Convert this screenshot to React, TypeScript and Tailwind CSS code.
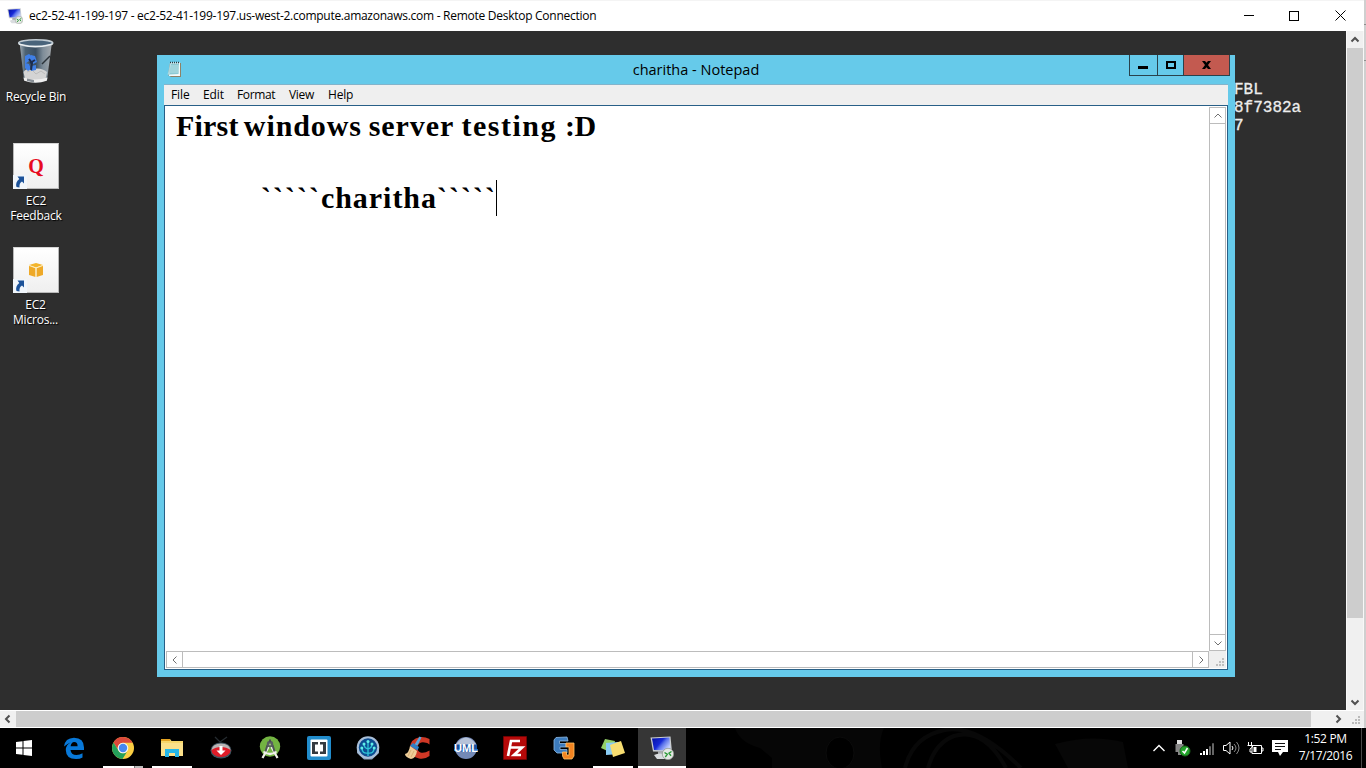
import React from "react";

const UI = "font-['Open_Sans','Noto_Sans',sans-serif]";

function Chevron({ dir, className }: { dir: "up" | "down" | "left" | "right"; className: string }) {
  const d = {
    up: "M1.5 6.5 5 3l3.5 3.5",
    down: "M1.5 3.5 5 7l3.5-3.5",
    left: "M6.5 1.5 3 5l3.5 3.5",
    right: "M3.5 1.5 7 5 3.5 8.5",
  }[dir];
  return (
    <svg width="10" height="10" viewBox="0 0 10 10" fill="none" stroke="currentColor" className={className}>
      <path d={d} />
    </svg>
  );
}

function Grip({ className }: { className: string }) {
  return (
    <svg width="9" height="9" viewBox="0 0 9 9" className={className} fill="currentColor">
      <path d="M6 0h2v2H6zM3 3h2v2H3zM6 3h2v2H6zM0 6h2v2H0zM3 6h2v2H3zM6 6h2v2H6z" />
    </svg>
  );
}

function RemoteIcon({ size }: { size: number }) {
  return (
    <svg width={size} height={size} viewBox="0 0 24 24" className="shrink-0">
      <defs>
        <linearGradient id="scr" x1="0" y1="0" x2="1" y2=".6">
          <stop offset="0" stopColor="#0410a0" />
          <stop offset=".5" stopColor="#1629d8" />
          <stop offset=".65" stopColor="#5870ea" />
          <stop offset="1" stopColor="#c2d0ff" />
        </linearGradient>
      </defs>
      <path d="M.5 1.500 20.500.500 22 16 3 15.500z" fill="#c9cdd0" />
      <path d="M2 2.500 19.500 1.500 20.500 14.500 4 14z" fill="url(#scr)" />
      <path d="M8 15h8l1 4H8z" fill="#a9adb0" />
      <path d="M4 19q6-3 12 0l-1 4H7z" fill="#d9dcdf" />
      <circle cx="18" cy="18" r="5.700" fill="#e4e8e4" stroke="#8d938d" strokeWidth=".7" />
      <path d="m14.500 16.500 2.800 1.800-2 2.700M21.500 15.500l-2.500 1.700 2 2.500" fill="none" stroke="#2a9a36" strokeWidth="1.400" />
    </svg>
  );
}

function RecycleBin() {
  return (
    <svg width="38" height="46" viewBox="0 0 38 46">
      <defs>
        <linearGradient id="bin" x1="0" x2="1">
          <stop offset="0" stopColor="#b5c3cd" />
          <stop offset=".18" stopColor="#536c80" />
          <stop offset=".5" stopColor="#3c546a" />
          <stop offset=".72" stopColor="#8c9dab" />
          <stop offset="1" stopColor="#b8bec3" />
        </linearGradient>
      </defs>
      <path d="M2.500 4 7 42q12 5 23 0l5-38z" fill="url(#bin)" opacity=".85" />
      <path d="M6.500 34q3-4 9-3 9-2 14.500 3l-1.500 7q-10 4-20.500 0z" fill="#d4d4d4" />
      <path d="m10 34 5-2 4 4 5-3 4 3" fill="none" stroke="#bcbcbc" />
      <path d="M6.500 39.500q12 4 24 0l-.7 3.200q-11.300 4-22.600 0z" fill="#eee" />
      <path d="m10 40.500 7 1.500v2.500l-7-1.500z" fill="#888f96" />
      <g fill="#3f7fe6">
        <path d="m8 18 4-2 5 4-2 4-3-1-4 3z" />
        <path d="m14 17 4 1 2 6-4 2-2-3z" />
        <path d="m8 25 4 1 2 5-3 2-3-3z" />
        <path d="m14 28 5-1v5l-5 1z" />
      </g>
      <path d="m12 21 3 4-1 7M13 25l5-3" fill="none" stroke="#1b2c4e" strokeWidth="2" />
      <path d="m33 18-8 8" stroke="#2b3339" strokeWidth="1.500" />
      <ellipse cx="18.700" cy="5" rx="17" ry="3.200" fill="#49647b" stroke="#c2ccd3" strokeWidth="1.600" />
      <path d="M2 6q16 5.500 33.500 0" fill="none" stroke="#eef2f4" strokeWidth="1.300" />
    </svg>
  );
}

function DesktopTile({ children }: { children: React.ReactNode }) {
  return (
    <div className="relative flex h-[46px] w-[46px] items-center justify-center border border-[#b9b9b9] border-t-[#d6d6d6] bg-linear-to-b from-white to-[#efefef]">
      {children}
      <svg width="14" height="14" viewBox="0 0 14 14" className="absolute -bottom-px -left-px bg-[#f1f6fb]">
        <path d="M4.500 1.500h6.500v7L9 6.500Q6 8 6.500 12.500L3.500 12Q2 7.500 6.300 4z" fill="#1c5299" />
      </svg>
    </div>
  );
}

function DesktopLabel({ children }: { children: React.ReactNode }) {
  return (
    <div className="whitespace-nowrap text-center text-[12px] leading-[15px] tracking-[-0.200px] text-white [text-shadow:1px_1px_1px_#000]">
      {children}
    </div>
  );
}

function NotepadIcon() {
  return (
    <svg width="16" height="17" viewBox="0 0 16 17">
      <path d="M3 2h11v14H4L1 14z" fill="#8f8266" />
      <path d="M3 1.500h10V15H2z" fill="#f2f9f9" />
      <path d="M3.500 2.500H12L11.500 13 2.500 13.500z" fill="#8ccad4" />
      <path d="M3 5h9M3 7h9M3 9h9M3 11h8" stroke="#bfe4e9" strokeWidth=".8" />
      <path d="M3 1.500h10" stroke="#2c3b40" strokeWidth="1.500" strokeDasharray="1 1" />
      <path d="m3 4-2.500 9.500 2 .5" fill="#a5d9e3" />
    </svg>
  );
}

function Notepad() {
  const button = "box-content flex h-[15px] w-[15px] shrink-0 items-center justify-center border-[#bcbcbc] bg-white text-[#707070]";
  return (
    <div className="absolute left-[157px] top-[24px] flex h-[622px] w-[1078px] flex-col bg-[#66caea] px-[7px] pb-[7px] text-black">
      <div className="relative flex h-[29px] shrink-0 items-center justify-center">
        <div className="absolute left-[3px] top-[6px]"><NotepadIcon /></div>
        <span className="whitespace-nowrap text-[14.5px] leading-[20px]">charitha - Notepad</span>
        <div className="absolute -right-[2px] top-0 flex h-[21px] divide-x divide-[#29424c] border border-t-0 border-[#29424c]">
          <div className="flex w-[28px] items-end justify-center pb-[6px] pr-px"><div className="h-[3px] w-[10px] bg-black" /></div>
          <div className="flex w-[26px] items-center justify-center"><div className="h-2 w-[10px] border-2 border-black" /></div>
          <div className="flex w-[45px] items-center justify-center bg-[#c35a50] pr-px">
            <svg width="9" height="8" viewBox="0 0 9 8"><path d="M0 0h3l1.500 1.800L6 0h3L6 4l3 4H6L4.500 6.200 3 8H0l3-4z" /></svg>
          </div>
        </div>
      </div>
      <div className="flex h-[21px] shrink-0 items-center gap-[14px] border-t border-[#83b4cb] bg-[#efefef] pl-[7px] text-[12px] leading-none">
        <span className="w-[18px] whitespace-nowrap tracking-[-0.100px]">File</span>
        <span className="w-[20px] tracking-[-0.100px]">Edit</span>
        <span className="w-[38px] tracking-[-0.350px]">Format</span>
        <span className="w-[25px] tracking-[-0.300px]">View</span>
        <span className="tracking-[-0.200px]">Help</span>
      </div>
      <div className="flex min-h-0 flex-1 flex-col border border-[#285f87] bg-white p-px">
        <div className="flex min-h-0 flex-1">
          <div className="flex-1 pl-[10px] pt-px font-['Liberation_Serif',serif] text-[30px] font-bold leading-9">
            <div className="whitespace-pre">
              <span className="tracking-[0.200px] [word-spacing:-2.500px]">First </span>
              <span className="tracking-[0.900px] [word-spacing:-1.500px]">windows </span>
              <span className="tracking-[0.900px] [word-spacing:-0.500px]">server </span>
              <span className="tracking-[1.500px] [word-spacing:-1px]">testing </span>
              <span className="tracking-[-0.500px]">:D</span>
            </div>
            <div className="h-9" />
            <div className="flex whitespace-nowrap pl-[85px]">
              <span className="tracking-[2px]">`````</span>
              <span className="tracking-[0.960px]">charitha</span>
              <span className="tracking-[2px]">`````</span>
              <span className="-ml-[1px] h-9 w-px bg-black" />
            </div>
          </div>
          <div className="flex w-[17px] flex-col justify-between border border-[#bcbcbc] bg-white">
            <div className={`${button} border-b`}><Chevron dir="up" className="" /></div>
            <div className={`${button} border-t`}><Chevron dir="down" className="" /></div>
          </div>
        </div>
        <div className="flex h-[17px] shrink-0">
          <div className="flex flex-1 justify-between border border-[#bcbcbc] bg-white">
            <div className={`${button} border-r`}><Chevron dir="left" className="" /></div>
            <div className={`${button} border-l`}><Chevron dir="right" className="" /></div>
          </div>
          <div className="flex w-[17px] items-end justify-end bg-[#efefef] pb-px pr-px"><Grip className="text-[#bfbfbf]" /></div>
        </div>
      </div>
    </div>
  );
}

const apps: { name: string; icon: React.ReactNode; bar?: string; active?: boolean }[] = [
  { name: "edge", icon: <svg width="22" height="22" viewBox="0 0 22 22"><path d="M1 9.500Q2 1 11 .7 21 1 21 10.500V13H7.500q.5 5 6 5 3.500 0 6-1.700v4.200Q17 22 13 22 3 22 2.800 13 2.700 8 8 5.200 5.500 6 1 9.500zM7.600 9.300h7q0-4.200-3.400-4.200-3 .2-3.600 4.200z" fill="#0878d8" fillRule="evenodd" /></svg> },
  { name: "chrome", bar: "chrome", icon: <svg width="22" height="22" viewBox="0 0 22 22"><circle cx="11" cy="11" r="11" fill="#fbce43" /><path d="M1.500 5.500A11 11 0 0 1 20.600 5.700H11a5.300 5.300 0 0 0-5 7z" fill="#dc493b" /><path d="M1.500 5.500A11 11 0 0 0 10.500 22l4.700-7.600A5.300 5.300 0 0 1 6.200 13z" fill="#23a05a" /><circle cx="11" cy="11" r="5.300" fill="#f5f5f5" /><circle cx="11" cy="11" r="4.200" fill="#4788f0" /></svg> },
  { name: "files", bar: "full", icon: <svg width="22" height="20" viewBox="0 0 22 20"><path d="M0 1h9l1.500 2H22v15H0z" fill="#f7d66a" /><path d="M0 1h9v2H0z" fill="#e4a322" /><path d="M0 5h22v13H0z" fill="#fbe08a" /><path d="M4 19v-8h14v8h-4v-4H8v4z" fill="#25b7e9" /></svg> },
  { name: "downloader", icon: <svg width="22" height="24" viewBox="0 0 22 24"><path d="m5 1 5 5 7-5" fill="none" stroke="#252b30" strokeWidth="1.300" /><ellipse cx="11" cy="14.500" rx="10.500" ry="8" fill="#3d535e" /><ellipse cx="11" cy="14.500" rx="9.500" ry="6.500" fill="#e01c28" /><path d="M1.500 14q1-6.500 9.500-6.500T20.500 14q-4-3-9.500-3t-9.500 3z" fill="#b9b4b4" /><path d="M9.500 10h3v4.500h3L11 19l-4.500-4.500h3z" fill="#fff" /></svg> },
  { name: "android", icon: <svg width="22" height="24" viewBox="0 0 22 24"><circle cx="11" cy="10.500" r="10.200" fill="#73b442" /><path d="m9.500 11-6 11M12.500 11l6 11M4.500 15.500q6.500 5 13 0" fill="none" stroke="#f0f1ea" strokeWidth="2.200" /><path d="m8.500 9-2 6.500M13.500 9l2 6.500" stroke="#4d5255" strokeWidth="2" /><circle cx="11" cy="8" r="3.200" fill="#585e60" /><path d="M11 3.500V6" stroke="#4b5052" strokeWidth="2" /><circle cx="11" cy="8.500" r="1.100" fill="#9fbe82" /></svg> },
  { name: "brackets", icon: <svg width="24" height="24" viewBox="0 0 24 24"><rect width="24" height="24" rx="2" fill="#218ccc" /><rect x="3.500" y="3.500" width="17" height="17" rx="1" fill="#fff" /><path d="M11 6H5v12h6v-2.500H8v-7h3zM13 6h6v12h-6v-2.500h3v-7h-3z" fill="#343a40" /></svg> },
  { name: "tree", icon: <svg width="24" height="24" viewBox="0 0 24 24"><path d="M1 13h22v4l-7 6.500H8L1 17z" fill="#8ca3bf" /><circle cx="12" cy="11.500" r="11.300" fill="#a9bfd9" /><circle cx="12" cy="11.500" r="9.200" fill="#0c4d92" /><path d="M12 20V6M12 17q-6 1-6-5M12 17q6 1 6-5M12 13q-4-1-4-5M12 13q4-1 4-5" fill="none" stroke="#2fc5d8" strokeWidth="1.300" /><g fill="#62eee8"><circle cx="12" cy="5.500" r="1.500" /><circle cx="8" cy="8" r="1.500" /><circle cx="16" cy="8" r="1.500" /><circle cx="5.800" cy="12" r="1.500" /><circle cx="18.200" cy="12" r="1.500" /></g></svg> },
  { name: "cleaner", icon: <svg width="25" height="24" viewBox="0 0 25 24"><path d="M24.500 8.500V3Q20 .5 15 1 5 3 5 12t9 10.500q6 1 10.500-2.500v-5.500q-5 3-9 2-4-2-3-6 2-5 7-4 3 0 5 2z" fill="#cf3826" /><path d="m14.500.5 2 1-4 8-3-1z" fill="#5aa5dc" /><path d="m8 7 6 4-1.500 3.500L5 10z" fill="#2d7fc7" /><path d="m5 10 7 5q-1 7-6 8-6-2-6-5 4-1 5-8z" fill="#eecd98" /><path d="m6 14-3 6M9 15l-3 6" stroke="#cfa266" strokeWidth=".7" /></svg> },
  { name: "uml", icon: <svg width="24" height="24" viewBox="0 0 24 24"><circle cx="12" cy="12" r="11" fill="#7389b6" /><path d="M2 8Q12-5 22 8v3H2z" fill="#b6c2d8" /><path d="M1 12h22" stroke="#174f9c" strokeWidth="7" /><path d="M0 14h24" stroke="#2f80da" strokeWidth="1.500" /><text x="0" y="15.500" textLength="24" lengthAdjust="spacingAndGlyphs" fill="white" fontFamily="Liberation Sans" fontWeight="bold" fontSize="10.500">UML</text></svg> },
  { name: "filezilla", icon: <svg width="24" height="24" viewBox="0 0 24 24"><path d="M.5.500h23v23H.5z" fill="#b50909" stroke="#8d0000" strokeDasharray="1 1" /><path d="M5 20 8 5h9M7 11.500h7M12 11.500h7l-8 7.500h7" fill="none" stroke="#fff" strokeWidth="2.700" /></svg> },
  { name: "ej", icon: <svg width="24" height="24" viewBox="0 0 24 24"><path d="M4 1.500 15 1l1 4H7.500v2.500H14V11H8v2.500h7V17H5l-3-3V4z" fill="#3c7bbd" stroke="#8ebbe6" strokeWidth=".8" /><path d="M14 7h8v13l-2 3h-8l-1.500-3v-4h4v3h2.500v-8H14z" fill="#f38421" stroke="#ffc568" strokeWidth=".8" /></svg> },
  { name: "notes", bar: "full", icon: <svg width="24" height="24" viewBox="0 0 24 24"><path d="m4 3 10 2-3 12L0 12z" fill="#92cf68" /><path d="m5 7 12-1 2 12-14 1z" fill="#8accf4" /><path d="m9 9 11-4 4 12-12 4z" fill="#f7dd71" /></svg> },
  { name: "remote", bar: "wide", active: true, icon: <RemoteIcon size={24} /> },
];

function Taskbar() {
  return (
    <div className="flex h-10 bg-black text-white">
      <div className="flex w-[48px] shrink-0 items-center justify-center">
        <svg width="16" height="16" viewBox="0 0 16 16" fill="#fff"><path d="M0 2 6.500 1.200V7.500H0zM7.500 1 16 0v7.500H7.500zM0 8.500h6.500v6.300L0 14zM7.500 8.500H16V16l-8.500-1z" /></svg>
      </div>
      <div className="ml-[2px] flex gap-px">
        {apps.map((app) => (
          <div key={app.name} className={`relative flex w-12 shrink-0 items-center justify-center ${app.active ? "bg-[#363636]" : ""}`}>
            {app.icon}
            {app.bar && (
              <div className={`absolute bottom-0 flex h-[2px] bg-white ${app.bar === "wide" ? "inset-x-0" : "inset-x-1"}`}>
                {app.bar === "chrome" && <div className="ml-auto w-[9px] border-l border-[#777] bg-[#bbb]" />}
              </div>
            )}
          </div>
        ))}
      </div>
      <svg className="ml-[14px] h-10 w-[450px] shrink-0" viewBox="0 0 450 40" fill="none">
        <path d="M35 0q5 15 25 20l12 10v10h110q-5-25 2-40z" fill="#060606" />
        <ellipse cx="140" cy="25" rx="14" ry="16" fill="#000" stroke="#0b0b0b" />
        <path d="M205 40Q213 8 245 2t76 38M228 40q7-25 26-32 30-9 52 32" stroke="#080808" strokeWidth="4" />
        <path d="M355 16q35-10 68-2l5 26h-60z" fill="#070707" />
      </svg>
      <div className="ml-[3px] flex shrink-0 items-center">
        <svg width="12" height="8" viewBox="0 0 12 8" fill="none" stroke="#fff" strokeWidth="1.400"><path d="m.5 7 5.500-5.500L11.500 7" /></svg>
        <svg className="ml-[9px]" width="17" height="18" viewBox="0 0 17 18"><path d="M3 1h5v5H3z" fill="#ddd" /><path d="M1.500 5h8v8H7v3H4v-3H1.500z" fill="#858585" /><circle cx="11" cy="12" r="5" fill="#22a52b" stroke="#1c651c" /><path d="m8.500 12 2 2 3-5" fill="none" stroke="#fff" strokeWidth="1.500" /></svg>
        <svg className="ml-[9px]" width="15" height="13" viewBox="0 0 15 13"><path d="M0 11h2v2H0zM3 9h2v4H3zM6 7h2v6H6z" fill="#fff" /><path d="M9.500 4.500h1V13h-1zM12.500 1.500h1V13h-1z" fill="#aaa" stroke="#777" strokeWidth=".5" /></svg>
        <svg className="ml-[8px]" width="17" height="14" viewBox="0 0 17 14" fill="none" stroke="#fff"><path d="M.5 4.500H3L7 1v12L3 9.500H.5z" /><path d="M9 5q2 2 0 4" /><path d="M11 3q4 4 0 8M13.500 1q5 6 0 12" stroke="#888" /></svg>
        <svg className="ml-[7px]" width="17" height="14" viewBox="0 0 17 14" fill="none" stroke="#fff"><path d="M5 4.500h9.500v8H5zM15 7h1v3h-1M1.500 1v3M4.500 1v3M.5 4.500h5v1.500L3 8v3h2" /><path d="M6.500 6h3v5h-3z" fill="#fff" stroke="none" /></svg>
        <svg className="ml-[8px]" width="16" height="16" viewBox="0 0 16 16"><path d="M0 0h16v12h-5l-3 4-2-4H0z" fill="#fff" /><path d="M3 3.500h10M3 6.500h10M3 9.500h6" stroke="#111" /></svg>
      </div>
      <div className="ml-auto mr-[4px] flex w-[72px] shrink-0 flex-col items-center justify-center border-r border-[#484848] pb-[2px] pr-0 text-[12px] leading-[17px]">
        <span className="whitespace-nowrap tracking-[-0.350px]">1:52 PM</span>
        <span className="whitespace-nowrap tracking-[-0.350px]">7/17/2016</span>
      </div>
    </div>
  );
}

export default function App() {
  return (
    <div className={`flex h-[768px] w-[1366px] flex-col overflow-hidden bg-white ${UI}`}>
      <div className="flex h-[728px] shrink-0">
        <div className="flex w-[1364px] shrink-0 flex-col">
          <header className="flex h-[31px] shrink-0 items-center border-t border-[#f4f4f4] pl-[7px] text-black">
            <RemoteIcon size={16} />
            <span className="ml-[6px] whitespace-nowrap text-[12px] leading-none tracking-[-0.270px]">ec2-52-41-199-197 - ec2-52-41-199-197.us-west-2.compute.amazonaws.com - Remote Desktop Connection</span>
            <div className="ml-auto mr-[18px] flex items-center gap-[35px] pb-px">
              <div className="-ml-px mr-px h-px w-[10px] bg-black" />
              <div className="-ml-px mr-px h-[10px] w-[10px] border border-black" />
              <svg width="11" height="11" viewBox="0 0 11 11" fill="none" stroke="#000"><path d="m.5.500 10 10M10.500.500l-10 10" /></svg>
            </div>
          </header>
          <div className="flex h-[679px] shrink-0">
            <main className="relative w-[1346px] overflow-hidden bg-[#2e2e2e]">
              <div className="flex w-[72px] flex-col items-center">
                <div className="mt-[7px]"><RecycleBin /></div>
                <div className="mt-[5px]"><DesktopLabel>Recycle Bin</DesktopLabel></div>
                <div className="mt-[39px]"><DesktopTile><span className="font-['Liberation_Serif',serif] text-[20px] font-bold leading-none text-[#e70b22]">Q</span></DesktopTile></div>
                <div className="mt-[4px]"><DesktopLabel>EC2<br />Feedback</DesktopLabel></div>
                <div className="mt-[24px]"><DesktopTile>
                  <svg width="16" height="16" viewBox="0 0 16 16"><path d="m8 1 7 2-7 2.500L1 3z" fill="#f3b52c" /><path d="M1 3.500 7.500 6v9L1 13zM8.500 6 15 3.500V13l-6.500 2z" fill="#eea928" /><path d="M1 3.500 8 6l7-2.500M8 6v9" stroke="#fff0bd" fill="none" strokeWidth=".8" /></svg>
                </DesktopTile></div>
                <div className="mt-[4px] pr-px"><DesktopLabel>EC2<br />Micros...</DesktopLabel></div>
              </div>
              <div className="absolute left-[1234px] top-[50px] font-['Liberation_Mono',monospace] text-[16px] leading-[18px] text-[#ededed] [-webkit-text-stroke:0.300px_#ededed]">
                <div>FBL</div><div>8f7382a</div><div>7</div>
              </div>
              <Notepad />
            </main>
            <div className="flex w-[18px] flex-col border-x border-x-[#f8f8f8] bg-[#f0f0f0]">
              <div className="flex h-[17px] items-center justify-center"><Chevron dir="up" className="stroke-2 text-[#505050]" /></div>
              <div className="h-[570px] bg-[#cdcdcd]" />
              <div className="mt-auto flex h-[17px] items-center justify-center"><Chevron dir="down" className="stroke-2 text-[#505050]" /></div>
            </div>
          </div>
          <div className="flex h-[18px] shrink-0 items-stretch border-y border-white bg-[#f0f0f0]">
            <div className="flex w-4 items-center justify-center"><Chevron dir="left" className="stroke-2 text-[#505050]" /></div>
            <div className="w-[1295px] bg-[#cdcdcd]" />
            <div className="ml-[19px] flex w-[16px] items-center justify-center"><Chevron dir="right" className="stroke-2 text-[#505050]" /></div>
            <div className="ml-auto flex items-end pb-[2px] pr-[3px]"><Grip className="text-[#bababa]" /></div>
          </div>
        </div>
        <div className="flex w-[2px] flex-col bg-[#cfcfcf]"><div className="mt-6 h-[37px] border-y border-[#8f8f8f]" /></div>
      </div>
      <Taskbar />
    </div>
  );
}
